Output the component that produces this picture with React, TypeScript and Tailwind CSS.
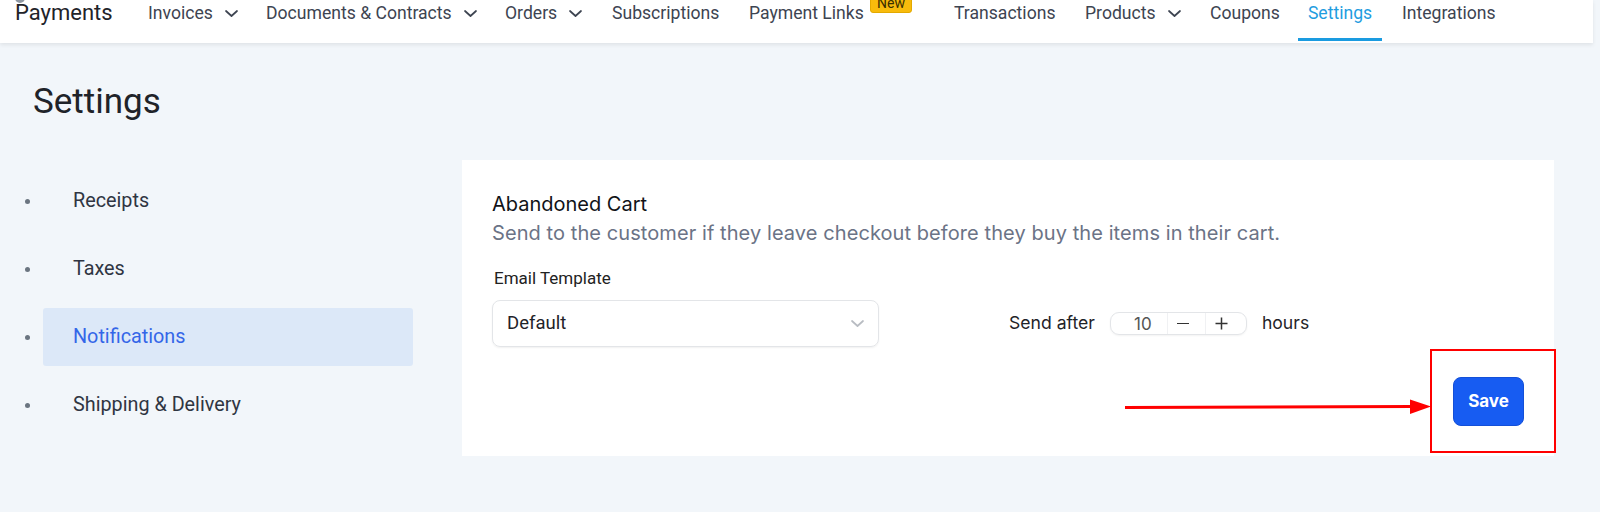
import React from "react";

const Chevron = ({ className = "" }: { className?: string }) => (
  <svg viewBox="0 0 13 7" className={className} fill="none" stroke="currentColor" strokeWidth="1.7" strokeLinecap="round" strokeLinejoin="round">
    <path d="M1 1 L6.5 6 L12 1" />
  </svg>
);

const navItems: { label: string; w: string; chevron?: boolean; badge?: boolean }[] = [
  { label: "Invoices", w: "w-[118px]", chevron: true },
  { label: "Documents & Contracts", w: "w-[239px]", chevron: true },
  { label: "Orders", w: "w-[107px]", chevron: true },
  { label: "Subscriptions", w: "w-[137px]" },
  { label: "Payment Links", w: "w-[205px]", badge: true },
  { label: "Transactions", w: "w-[131px]" },
  { label: "Products", w: "w-[125px]", chevron: true },
  { label: "Coupons", w: "w-[88px]" },
];

const sideItems = ["Receipts", "Taxes", "Notifications", "Shipping & Delivery"];

export default function App() {
  return (
    <div className="min-h-[512px] w-[1600px] bg-[#f2f6fa] font-['Roboto',sans-serif] overflow-hidden">
      {/* Header */}
      <div className="h-[43px] w-[1593px] bg-white shadow-[0_2px_4px_rgba(0,0,0,0.08)] flex items-start relative">
        <div className="absolute left-[15px] top-[-7px] w-[10px] h-[10px] rounded-full bg-[#8f98a3]" />
        <div className="w-[148px] shrink-0 pl-[15px] h-[24px] flex items-center text-[22px] text-[#1f2329]">Payments</div>
        {navItems.map((it) => (
          <div key={it.label} className={`${it.w} shrink-0 h-[27px] flex items-center text-[17.6px] text-[#3d4451] relative`}>
            <span>{it.label}</span>
            {it.chevron && <Chevron className="w-[13px] h-[7px] ml-[12px] text-[#3d4451]" />}
            {it.badge && (
              <span className="absolute left-[121px] top-[-6px] h-[19px] w-[42px] text-center rounded-[3px] bg-[#f8bb0c] border border-[#e3a900] text-[14px] leading-[17px] text-[#3a2e00]">
                New
              </span>
            )}
          </div>
        ))}
        <div className="w-[84px] shrink-0 h-[43px] flex flex-col items-center relative">
          <div className="h-[27px] flex items-center text-[17.6px] text-[#1f9ddf]">Settings</div>
          <div className="absolute top-[38px] left-0 right-0 h-[2.5px] bg-[#1a9be0]" />
        </div>
        <div className="ml-[20px] h-[27px] flex items-center text-[17.6px] text-[#3d4451]">Integrations</div>
      </div>

      {/* Title */}
      <div className="pl-[33px] pt-[38px] h-[117px] text-[35px] leading-[42px] text-[#1f2329]">Settings</div>

      {/* Body */}
      <div className="flex items-start">
        {/* Sidebar */}
        <div className="w-[462px] shrink-0 pt-[12px] flex flex-col gap-[10px]">
          {sideItems.map((s) => {
            const active = s === "Notifications";
            return (
              <div key={s} className="flex items-center">
                <div className="w-[5px] h-[5px] rounded-full bg-[#6b7580] ml-[25px] mr-[13px]" />
                <div
                  className={`w-[370px] h-[58px] rounded-[3px] pl-[30px] flex items-center text-[19.8px] ${
                    active ? "bg-[#dce8f8] text-[#3466e8]" : "text-[#2f3542]"
                  }`}
                >
                  {s}
                </div>
              </div>
            );
          })}
        </div>

        {/* Card */}
        <div className="w-[1092px] shrink-0 bg-white px-[30px] pt-[29px] pb-[30px] relative">
          <div className="font-['Inter',sans-serif] text-[20px] leading-[30px] text-[#111318]">Abandoned Cart</div>
          <div className="font-['Inter',sans-serif] text-[20px] leading-[28px] tracking-[0.08px] text-[#6b7386]">
            Send to the customer if they leave checkout before they buy the items in their cart.
          </div>
          <div className="mt-[20px] pl-[2px] text-[17px] leading-[22px] text-[#222]">Email Template</div>
          <div className="mt-[11px] flex items-center">
            <div className="w-[387px] shrink-0 h-[47px] rounded-[8px] border border-[#e3e5e8] shadow-[0_1px_2px_rgba(0,0,0,0.06)] flex items-center justify-between pl-[14px] pr-[14px]">
              <span className="text-[18.5px] text-[#1f2329]">Default</span>
              <Chevron className="w-[13px] h-[7px] text-[#b8bcc2]" />
            </div>
            <span className="ml-[130px] font-['Inter',sans-serif] text-[17.6px] text-[#1f2329]">Send after</span>
            <div className="ml-[15px] w-[137px] shrink-0 h-[23px] rounded-[9px] border border-[#e3e5e8] shadow-[0_1px_2px_rgba(0,0,0,0.05)] flex items-center">
              <div className="w-[56px] pl-[8px] text-center font-['Inter',sans-serif] text-[17px] text-[#555] pt-[2px]">10</div>
              <div className="w-[38px] h-full border-l border-[#f0f1f3] flex items-center justify-center pr-[6px]">
                <div className="w-[12px] h-[1.5px] bg-[#333]" />
              </div>
              <div className="flex-1 h-full border-l border-[#f0f1f3] flex items-center justify-center pr-[8px]">
                <svg viewBox="0 0 13 13" className="w-[13px] h-[13px]" stroke="#333" strokeWidth="1.5">
                  <path d="M6.5 0.5 V12.5 M0.5 6.5 H12.5" />
                </svg>
              </div>
            </div>
            <span className="ml-[15px] font-['Inter',sans-serif] text-[17.6px] text-[#1f2329]">hours</span>
          </div>
          <div className="mt-[30px] flex justify-end">
            <button className="w-[71px] h-[49px] rounded-[8px] bg-[#175cf2] border border-[#1450d8] text-white text-[17px] font-bold font-['Inter',sans-serif]">
              Save
            </button>
          </div>

          {/* Annotation overlay */}
          <div className="absolute left-[968px] top-[189px] w-[126px] h-[104px] border-[2.5px] border-[#ff0000]" />
          <svg className="absolute left-[663px] top-[238px]" width="306" height="18" viewBox="0 0 306 18">
            <path d="M0 9.5 L288 8.5" stroke="#ff0000" strokeWidth="3" />
            <path d="M285 1.5 L306 8.5 L285 16 Z" fill="#ff0000" />
          </svg>
        </div>
      </div>
    </div>
  );
}
